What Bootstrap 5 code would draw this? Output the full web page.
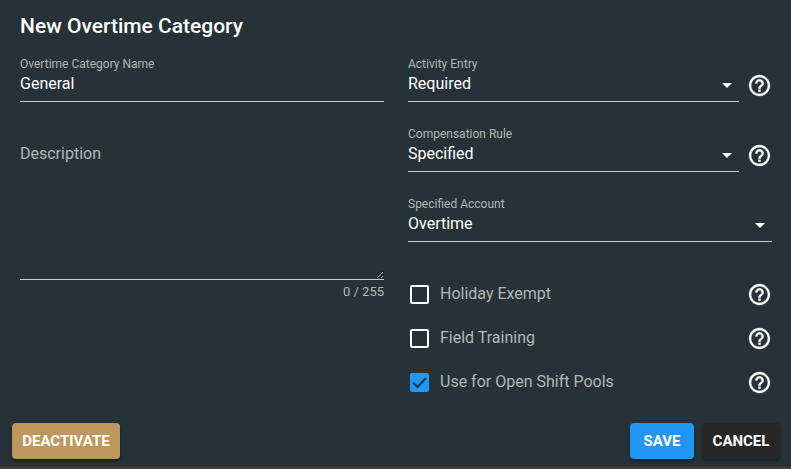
<!DOCTYPE html>
<html lang="en">
<head>
<meta charset="utf-8">
<meta name="viewport" content="width=device-width, initial-scale=1">
<title>New Overtime Category</title>
<link href="https://cdn.jsdelivr.net/npm/bootstrap@5.3.0/dist/css/bootstrap.min.css" rel="stylesheet">
<style>
  body { background: #263238; color: #fff; font: 16px/20px Roboto, "Liberation Sans", sans-serif; }
  .panel { border-bottom: 2px solid #424242; }
  .panel-title { font-size: 21px; line-height: 28px; font-weight: 500; }
  .fields { margin: 0 7px 0 8px; }
  .actions { margin: 0 11px 0 12px; }
  .soft { color: #b3b7b9; }
  .field { height: 46px; border-bottom: 1px solid #c3cdd2; }
  .field label { font-size: 12px; line-height: 16px; color: #b3b7b9; }
  .field .form-control, .field .form-select {
    height: 24px; padding: 0; border: 0; border-radius: 0; background-color: transparent;
    color: #fff; font-size: 16px; line-height: 24px; box-shadow: none;
  }
  .field .form-select {
    background: url("data:image/svg+xml,%3Csvg xmlns='http://www.w3.org/2000/svg' viewBox='0 0 24 24'%3E%3Cpath fill='white' d='M7 11l5 5 5-5z'/%3E%3C/svg%3E") no-repeat right 0 center / 24px 24px;
  }
  .field .form-select option { color: #222; }
  .notes {
    height: 154px; padding: 18px 0 0; color: #fff; color-scheme: dark; background: transparent;
    border: 0; border-bottom: 1px solid #c3cdd2; border-radius: 0; line-height: 20px;
  }
  .notes::placeholder { color: #b3b7b9; }
  .notes:focus { color: #fff; background: transparent; box-shadow: none; }
  .counter { font-size: 13px; line-height: 24px; }
  .help { width: 25px; height: 25px; color: #fff; }
  .field + .help { margin-top: 12px; }
  .help svg { display: block; width: 25px; height: 25px; fill: currentColor; stroke: currentColor; stroke-width: .3; }
  .options { padding-top: 6px; }
  .option { height: 44px; }
  .option label { padding-left: 11px; }
  .option .form-check-input {
    width: 19px; height: 19px; margin: 0 0 0 2px; border: 2px solid #fff; border-radius: 2px; background-color: transparent;
  }
  .option .form-check-input:checked {
    border-color: #2196f3; background-color: #2196f3; background-origin: border-box;
    background-size: 19px 19px;
    background-image: url("data:image/svg+xml,%3Csvg xmlns='http://www.w3.org/2000/svg' viewBox='0 0 19 19'%3E%3Cpath fill='none' stroke='%23263238' stroke-width='2' d='M3 9.500l4.500 4.500L16 5'/%3E%3C/svg%3E");
  }
  .action {
    height: 36px; padding: 0 8px; border: 0; border-radius: 4px; color: #fff;
    font-size: 15px; line-height: 36px; font-weight: 700;
    box-shadow: 0 2px 3px rgba(0, 0, 0, .35);
  }
  .action:hover { color: #fff; }
  .tan, .tan:hover { background: #bd975b; width: 108px; }
  .blue, .blue:hover { background: #2196f3; width: 64px; }
  .dark-btn, .dark-btn:hover { background: #272727; width: 78px; }
</style>
</head>
<body>
<svg class="d-none" aria-hidden="true">
  <symbol id="help" viewBox="0 0 24 24"><path d="M11 18h2v-2h-2v2zm1-16C6.480 2 2 6.480 2 12s4.480 10 10 10 10-4.480 10-10S17.520 2 12 2zm0 18c-4.410 0-8-3.590-8-8s3.590-8 8-8 8 3.590 8 8-3.590 8-8 8zm0-14c-2.210 0-4 1.790-4 4h2c0-1.100.9-2 2-2s2 .9 2 2c0 2-3 1.750-3 5h2c0-2.250 3-2.500 3-5 0-2.210-1.790-4-4-4z"/></symbol>
</svg>
<form class="panel d-flex flex-column min-vh-100 pb-2">
  <h1 class="panel-title m-0 mx-3 px-1 pt-2 mt-1 mb-3">New Overtime Category</h1>
  <div class="row fields flex-grow-1">
    <div class="col-6">
      <div class="field mb-4">
        <label class="d-block" for="name">Overtime Category Name</label>
        <input class="form-control" id="name" type="text" value="General">
      </div>
      <textarea class="form-control notes" id="notes" maxlength="255" placeholder="Description" aria-label="Description"></textarea>
      <div class="counter soft text-end">0 / 255</div>
    </div>
    <div class="col-6">
      <div class="d-flex align-items-center mb-4">
        <div class="field flex-grow-1 me-2">
          <label class="d-block" for="activity">Activity Entry</label>
          <select class="form-select" id="activity"><option>Required</option><option>Optional</option></select>
        </div>
        <button class="btn help p-0 border-0" type="button" aria-label="Activity entry help"><svg><use href="#help"/></svg></button>
      </div>
      <div class="d-flex align-items-center mb-4">
        <div class="field flex-grow-1 me-2">
          <label class="d-block" for="rule">Compensation Rule</label>
          <select class="form-select" id="rule"><option>Specified</option><option>Any</option></select>
        </div>
        <button class="btn help p-0 border-0" type="button" aria-label="Compensation rule help"><svg><use href="#help"/></svg></button>
      </div>
      <div class="field mb-4">
        <label class="d-block" for="account">Specified Account</label>
        <select class="form-select" id="account"><option>Overtime</option></select>
      </div>
      <div class="options">
        <div class="option d-flex align-items-center">
          <input class="form-check-input flex-shrink-0" type="checkbox" id="holiday">
          <label class="soft flex-grow-1" for="holiday">Holiday Exempt</label>
          <button class="btn help p-0 border-0" type="button" aria-label="Holiday exempt help"><svg><use href="#help"/></svg></button>
        </div>
        <div class="option d-flex align-items-center">
          <input class="form-check-input flex-shrink-0" type="checkbox" id="training">
          <label class="soft flex-grow-1" for="training">Field Training</label>
          <button class="btn help p-0 border-0" type="button" aria-label="Field training help"><svg><use href="#help"/></svg></button>
        </div>
        <div class="option d-flex align-items-center">
          <input class="form-check-input flex-shrink-0" type="checkbox" id="pools" checked>
          <label class="soft flex-grow-1" for="pools">Use for Open Shift Pools</label>
          <button class="btn help p-0 border-0" type="button" aria-label="Open shift pools help"><svg><use href="#help"/></svg></button>
        </div>
      </div>
    </div>
  </div>
  <div class="actions d-flex gap-2">
    <button class="btn action tan me-auto" type="button">DEACTIVATE</button>
    <button class="btn action blue" type="submit">SAVE</button>
    <button class="btn action dark-btn" type="button">CANCEL</button>
  </div>
</form>
<script src="https://cdn.jsdelivr.net/npm/bootstrap@5.3.0/dist/js/bootstrap.bundle.min.js"></script>
</body>
</html>
